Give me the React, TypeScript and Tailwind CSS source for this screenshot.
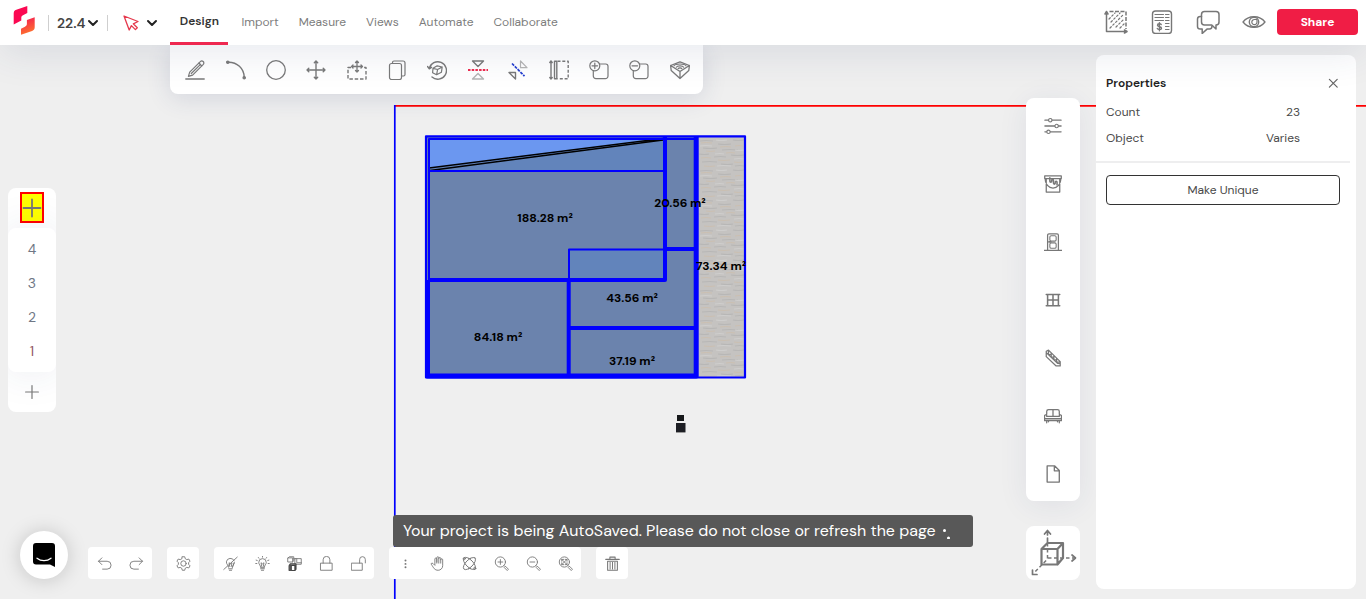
import type { ReactNode } from "react";

type IconProps = { children: ReactNode; box?: number; className?: string };

function Icon({ children, box = 20, className = "size-5" }: IconProps) {
  return (
    <svg
      viewBox={`0 0 ${box} ${box}`}
      className={`shrink-0 ${className}`}
      fill="none"
      stroke="currentColor"
      strokeWidth={1.2}
      strokeLinecap="round"
      strokeLinejoin="round"
      aria-hidden="true"
    >
      {children}
    </svg>
  );
}

type Tool = { label: string; icon: ReactNode };

const drawTools: Tool[] = [
  {
    label: "Draw line",
    icon: (
      <>
        <path d="M.8 19h18.400" strokeWidth="1.400" />
        <path d="M3.400 16.400l1.300-4.300L15.300 1.600a2 2 0 0 1 3 2.800L7.600 15.100zM13.800 3l3 3M6.300 13.500L15.500 4.400M3.400 16.400l1.500-.5" />
      </>
    ),
  },
  {
    label: "Draw arc",
    icon: (
      <>
        <path d="M2 2.300c9-.3 16 6 16.300 15.200" strokeWidth="1.400" />
        <circle cx="1.800" cy="2.200" r="1.200" fill="currentColor" />
        <circle cx="18.200" cy="17.800" r="1.200" fill="currentColor" />
      </>
    ),
  },
  { label: "Circle", icon: <circle cx="10" cy="10" r="9.300" strokeWidth="1.300" /> },
  {
    label: "Move",
    icon: <path d="M10 1v18M1 10h18M8.300 2.800L10 1l1.700 1.800M8.300 17.200L10 19l1.700-1.800M2.800 8.300L1 10l1.800 1.700M17.200 8.300L19 10l-1.800 1.700" strokeWidth="1.400" />,
  },
  {
    label: "Move copy",
    icon: (
      <>
        <path d="M4 7.500H1V19h18V7.500h-3" strokeDasharray="3.500 1.800" strokeLinecap="butt" strokeWidth="1.400" />
        <path d="M10 1v11M4.500 6.500h11M8.500 2.500L10 1l1.500 1.500M8.500 10.500L10 12l1.500-1.500M6 5L4.500 6.500 6 8M14 5l1.500 1.500L14 8" strokeWidth="1.300" />
      </>
    ),
  },
  {
    label: "Copy",
    icon: (
      <>
        <rect x="2.500" y="3.500" width="12" height="16" rx="2" />
        <path d="M5.500 3.500v-1a1.500 1.500 0 0 1 1.500-1.500h9a2 2 0 0 1 2 2v11.500a1.500 1.500 0 0 1-1.500 1.500h-2" />
      </>
    ),
  },
  {
    label: "Rotate",
    icon: (
      <>
        <path d="M2.300 8.500A8.700 8.700 0 1 1 5 17M.5 6.500l1.800 2.300 2.200-1.400" strokeWidth="1.400" />
        <path d="M6 8.300l4.200-2.500 5 1.200-.8 5.300-4.800 2.400-4-2zM6 8.300l4.600 1.200 4.600-2.500M10.600 9.500l-1 5.200" />
      </>
    ),
  },
  {
    label: "Mirror vertical",
    icon: (
      <>
        <path d="M4.500 1h11L10 6.500z" strokeWidth="1.400" />
        <path d="M4.500 19h11L10 13.500z" stroke="#b5b5b5" strokeWidth="1.400" />
        <path d="M0 10h20" stroke="#ef2b4f" strokeDasharray="2.500 1.200" strokeWidth="2" strokeLinecap="butt" />
      </>
    ),
  },
  {
    label: "Mirror diagonal",
    icon: (
      <>
        <path d="M1 12.500h6.500V19z" strokeWidth="1.400" />
        <path d="M12.500 1v6.700h6.500z" stroke="#b5b5b5" />
        <path d="M4 3.500l12.500 12.700" stroke="#243fd0" strokeDasharray="3 1" strokeWidth="1.700" strokeLinecap="butt" />
      </>
    ),
  },
  {
    label: "Offset",
    icon: (
      <>
        <path d="M8.500 1.300h10.700v17.500H8.500" strokeDasharray="3 1.800" strokeLinecap="butt" strokeWidth="1.400" />
        <path d="M5.500 1.200h2.300v17.600H5.500zM2 1v18M.8 2.500L2 1l1.200 1.500M.8 17.500L2 19l1.200-1.500" strokeWidth="1.400" />
      </>
    ),
  },
  {
    label: "Add shape",
    icon: (
      <>
        <path d="M10.500 4h6.200a2.300 2.300 0 0 1 2.300 2.300V16a2.600 2.600 0 0 1-2.600 2.600H6.900A2.600 2.600 0 0 1 4.300 16v-5.500" />
        <circle cx="5.800" cy="5.800" r="5" />
        <path d="M5.800 3v5.600M3 5.800h5.600" />
      </>
    ),
  },
  {
    label: "Subtract shape",
    icon: (
      <>
        <path d="M10.500 4h6.200a2.300 2.300 0 0 1 2.300 2.300V16a2.600 2.600 0 0 1-2.600 2.600H6.900A2.600 2.600 0 0 1 4.300 16v-5.500" />
        <circle cx="5.800" cy="5.800" r="5" />
        <path d="M3 5.800h5.600" />
      </>
    ),
  },
  {
    label: "Terrain",
    icon: (
      <>
        <path d="M10 1.800L.6 5.500l.6 5L10 18.500l8.800-8 .6-5zM.6 5.500L10 11.500l9.400-6M10 11.500v7" strokeWidth="1.300" />
        <path d="M4 5.800c1.500-2.400 10.500-2.400 12 0M6.300 7.200c1-1.700 6.400-1.700 7.400 0M8.200 8.600c.6-1 3-1 3.600 0" />
      </>
    ),
  },
];

const sideTools: Tool[] = [
  {
    label: "Settings",
    icon: (
      <>
        <path d="M1 3.500h4M9 3.500h10M1 10h11M16 10h3M1 16.500h2M7 16.500h12" strokeWidth="1.400" />
        <circle cx="7" cy="3.500" r="1.900" />
        <circle cx="14" cy="10" r="1.900" />
        <circle cx="5" cy="16.500" r="1.900" />
      </>
    ),
  },
  {
    label: "Materials",
    icon: (
      <>
        <path d="M.8 1h18.400v3H.8zM2.500 4v15h15V4M1.200 4c0 6 4 10.500 8.800 10.500S18.800 10 18.800 4" strokeWidth="1.400" />
        <path d="M6.500 3v4c0 1.500 2 1.500 2 0V6c0-1.500 2-1.500 2 0v3c0 1.500 2 1.500 2 0M12.500 8c0-1.500 2-1.500 2 0v3" strokeWidth="1.700" />
      </>
    ),
  },
  {
    label: "Doors",
    icon: (
      <>
        <path d="M0 19.200h20M4 19V2.500A1.500 1.500 0 0 1 5.500 1h9A1.500 1.500 0 0 1 16 2.500V19" strokeWidth="1.400" />
        <rect x="6.500" y="3" width="7" height="6" rx="1.500" />
        <rect x="6.500" y="11" width="7" height="6" rx="1.500" />
        <path d="M5.500 9.800h2" strokeWidth="2" />
      </>
    ),
  },
  {
    label: "Windows",
    icon: <path d="M2.500 4h15M2.500 16.500h15M4 4v12.500M16 4v12.500M10 4v12.500M4 10h12" strokeWidth="1.700" />,
  },
  {
    label: "Stairs",
    icon: <path d="M2.500 8.500v-6L5 1.200 18 14v4.800h-4.500zM2.500 4L15 16l3 .2M5 1.500v4.800h3V9h3v3h3v2.500h3M8 6.500V4.500M11 9V7.500M14 12v-1.500" strokeWidth="1.400" />,
  },
  {
    label: "Furniture",
    icon: <path d="M3 8V5a2 2 0 0 1 2-2h10a2 2 0 0 1 2 2v3M10 3v7M3 10.500V9.300a1.300 1.300 0 0 0-2.400.5v5.200h18.800V9.800A1.300 1.300 0 0 0 17 9.300v1.200zM.6 12.800h18.800M3 15v2.500M17 15v2.500M5 15v1.500M15 15v1.500" strokeWidth="1.400" />,
  },
  {
    label: "Documents",
    icon: <path d="M3.500 1h8.500l5 5v13h-13.500zM11.500 1v5.500H17" strokeWidth="1.500" />,
  },
];

const bottomGroups: Tool[][] = [
  [
    { label: "Undo", icon: <path d="M6.500 2.500L2 7l4.500 4.500M2 7h11.500a5.200 5.200 0 0 1 0 10.500H7.500" /> },
    { label: "Redo", icon: <path d="M13.500 2.500L18 7l-4.500 4.500M18 7H6.500a5.200 5.200 0 0 0 0 10.500h6" /> },
  ],
  [
    {
      label: "Preferences",
      icon: (
        <>
          <path d="M8.400 1h3.200l.8 2.700 2 1.100 2.700-.7 1.600 2.800-1.900 2v2.200l1.900 2-1.600 2.800-2.700-.7-2 1.100-.8 2.700H8.400l-.8-2.700-2-1.100-2.700.7-1.600-2.800 1.900-2V8.900l-1.900-2 1.600-2.800 2.700.7 2-1.100z" />
          <circle cx="10" cy="10" r="3.600" />
        </>
      ),
    },
  ],
  [
    {
      label: "Hide",
      icon: <path d="M7.500 15c0-3-3-3.500-3-7.200A5.500 5.500 0 0 1 15 6.500M15 9c-.3 3-2.500 3.500-2.500 6zM7.500 17h5M8.500 19h3M9 14l-1-5 2 1.500L12 9l-1 5M1 18L19 1.500" />,
    },
    {
      label: "Show",
      icon: <path d="M7.500 15c0-3-2.500-3.500-2.500-6.500a5 5 0 0 1 10 0c0 3-2.500 3.500-2.500 6.500zM7.500 17h5M8.500 19h3M9 14l-1-5 2 1.500L12 9l-1 5M10 .5v1M4.500 2l.7 1M15.500 2l-.7 1M1.500 5.500l1.500.5M18.500 5.500L17 6M1 10h1.500M17.500 10H19" />,
    },
    {
      label: "Isolate",
      icon: (
        <>
          <path d="M1.500 2.500h6V8h-6zM1.500 2.500L3 1h6v5.500L7.500 8M11 3.500h8V11h-8zM13 3.500v5.500h6M9 3.500h2" />
          <path d="M3 12.500h7.500v7H3zM3 12.500L4.500 10.500H12v7l-1.500 2" stroke="#444" strokeWidth="1.500" />
          <path d="M3.500 13H6v6H3.500z" fill="#555" stroke="#555" />
        </>
      ),
    },
    {
      label: "Lock",
      icon: <path d="M2.500 9.500h15V19h-15zM5.500 9.500V5a4.500 4.500 0 0 1 9 0v4.500" />,
    },
    {
      label: "Unlock",
      icon: <path d="M1 9.500h14V19H1zM11.500 9.500V4.700a3.800 3.800 0 0 1 7.600 0v4.500" />,
    },
  ],
  [
    {
      label: "More",
      icon: (
        <g fill="currentColor" stroke="none">
          <circle cx="10" cy="6" r="1.300" />
          <circle cx="10" cy="10.500" r="1.300" />
          <circle cx="10" cy="15" r="1.300" />
        </g>
      ),
    },
    {
      label: "Pan",
      icon: <path d="M6.500 11.500V4a1.300 1.300 0 0 1 2.600 0v5.500M9.100 8V2.300a1.300 1.300 0 0 1 2.600 0v7.200M11.700 3.300a1.300 1.300 0 0 1 2.600 0v6.200M14.300 5a1.300 1.300 0 0 1 2.600 0v8a6 6 0 0 1-6 6C6 19 5 16 1.700 11c-.7-1.500 1.300-2 2.300-1l2.500 2.500" />,
    },
    {
      label: "Orbit",
      icon: (
        <>
          <ellipse cx="10" cy="10" rx="10.500" ry="4.800" transform="rotate(45 10 10)" />
          <ellipse cx="10" cy="10" rx="10.500" ry="4.800" transform="rotate(-45 10 10)" />
          <circle cx="3" cy="3.500" r="1.400" />
          <circle cx="17" cy="16.500" r="1.400" />
          <path d="M8.500 2.500L10 4l1.500-1.500M8.500 17.500L10 16l1.500 1.500" />
        </>
      ),
    },
    {
      label: "Zoom in",
      icon: (
        <>
          <circle cx="8.500" cy="8" r="6.800" />
          <path d="M8.500 4.800v6.400M5.300 8h6.400M13.500 12.800l1 1M14 15l1.300-1.300 4 4-1.300 1.300z" />
        </>
      ),
    },
    {
      label: "Zoom out",
      icon: (
        <>
          <circle cx="8.500" cy="8" r="6.800" />
          <path d="M5.300 8h6.400M13.500 12.800l1 1M14 15l1.300-1.300 4 4-1.300 1.300z" />
        </>
      ),
    },
    {
      label: "Zoom to fit",
      icon: (
        <>
          <circle cx="8.500" cy="8" r="6.800" />
          <path d="M5 4.500l7 7M12 4.500l-7 7M5 7V4.500h2.500M9.500 4.500H12V7M5 9v2.500h2.500M9.500 11.500H12V9M13.500 12.800l1 1M14 15l1.300-1.300 4 4-1.300 1.300z" />
        </>
      ),
    },
  ],
  [
    {
      label: "Delete",
      icon: (
        <>
          <path d="M1 4.500h18M6.500 4V1.500h7V4M3.500 7h13V19h-13z" strokeWidth="1.400" />
          <path d="M6.800 8.500v9M10 8.500v9M13.200 8.500v9" strokeWidth="1.300" />
        </>
      ),
    },
  ],
];

const tabs = ["Import", "Measure", "Views", "Automate", "Collaborate"];

const rooms = [
  { area: "188.28 m²", x: 545, y: 222 },
  { area: "20.56 m²", x: 680, y: 207 },
  { area: "73.34 m²", x: 721, y: 270 },
  { area: "43.56 m²", x: 632, y: 302 },
  { area: "84.18 m²", x: 498, y: 341 },
  { area: "37.19 m²", x: 632, y: 365 },
];

function Plan() {
  return (
    <svg className="absolute inset-0 h-full w-full" role="img" aria-label="Floor plan">
      <defs>
        <pattern id="stone" x="698" y="138" width="47" height="30" patternUnits="userSpaceOnUse">
          <rect width="47" height="30" fill="#c5c3c1" />
          <path d="M2 3q6-1 13 0M20 6q7 1 13 0M35 2q5 1 11 0M5 10q8 1 14 0M24 12q8-1 16 0M1 16q6 1 10 0M16 19q7-1 12 0M33 17q6 1 13 0M4 24q8-1 15 0M23 26q7 1 12 0M37 28q5-1 9 0" fill="none" stroke="#b8b7b6" strokeWidth="1.200" />
          <path d="M3 5q5-1 11 0M22 9q6-1 11 0M37 8q4-1 8 0M8 13q4 1 9 0M28 15q5-1 9 0M3 20q5-1 10 0M20 22q6 1 12 0M36 24q4 1 9 0M6 28q6 1 11 0" fill="none" stroke="#cbbfb1" strokeWidth="1" />
          <path d="M18 2q5 1 11 0M2 8q6-1 12 0M37 12q4 1 9 0M17 16q5-1 9 0M19 28q6-1 14 0M36 21q5-1 10 0" fill="none" stroke="#cfcecd" strokeWidth="1.200" />
        </pattern>
      </defs>
      <path d="M395 105.800H4000" stroke="#ff0000" strokeWidth="1.700" />
      <path d="M394.800 105V4000" stroke="#0000ff" strokeWidth="1.700" />

      <rect x="427" y="137" width="270" height="240" fill="#6b83ad" />
      <path d="M429 139H665L429 169z" fill="#6b97f0" />
      <path d="M665 139V171H429V169z" fill="#6284bb" />
      <rect x="570" y="250" width="95" height="29" fill="#6284bb" />
      <rect x="697" y="137" width="48" height="240" fill="url(#stone)" />

      <path d="M429 168L663 138.500M430 170.500L665 139.800" stroke="#000" strokeWidth="1.500" />

      <g fill="none" stroke="#0000ff" strokeLinejoin="round">
        <path d="M426 136.300H745V377.500H426z" strokeWidth="2.200" />
        <path d="M429 376V139H697" strokeWidth="2" />
        <path d="M429 171H665M569 281V249.500H665" strokeWidth="2" />
        <path d="M429 280H665V137" strokeWidth="4" />
        <path d="M665 249H697M568.700 280V376M569 328H697" strokeWidth="4" />
        <path d="M427.500 280V376H696.200V137" strokeWidth="5" />
      </g>

      <g className="text-xs font-bold" fill="#000" textAnchor="middle">
        {rooms.map((room) => (
          <text key={room.area} x={room.x} y={room.y}>
            {room.area}
          </text>
        ))}
      </g>

      <rect x="677" y="415" width="7" height="6" fill="#16181a" />
      <rect x="676" y="423" width="9.500" height="9" fill="#1d1e24" />
      <path d="M676 432.500h9.500" stroke="#999" />
    </svg>
  );
}

function Chevron() {
  return (
    <svg viewBox="0 0 12 8" className="h-2 w-3 shrink-0" fill="none" stroke="#222" strokeWidth="2" strokeLinecap="round" strokeLinejoin="round" aria-hidden="true">
      <path d="M2 2l4 4 4-4" />
    </svg>
  );
}

function Header() {
  return (
    <header className="relative z-10 flex h-[45px] shrink-0 items-center bg-white pr-2 pl-[13px] shadow-[0_6px_40px_rgba(40,55,110,0.12)]">
      <a href="#home" aria-label="Home" className="mb-1 shrink-0">
        <svg viewBox="0 0 22 30" className="h-[30px] w-[22px]" aria-hidden="true">
          <defs>
            <linearGradient id="flame" x1="0.500" y1="0" x2="0.800" y2="1">
              <stop offset="0" stopColor="#f5204f" />
              <stop offset="1" stopColor="#ff7d2a" />
            </linearGradient>
          </defs>
          <path d="M14.300 0v7L10 9.200c-1.200.6-1.700 1.400-1.700 2.600v2.700L.7 18.500V7.500C.7 5.500 1.500 4.500 3.300 3.800z" fill="#fb0852" />
          <path d="M21.700 11.200v10c0 2-.8 3-2.600 3.700L8 28.700v-6l4-2c1.300-.7 1.900-1.500 1.900-2.900V14z" fill="url(#flame)" />
        </svg>
      </a>
      <button className="ml-[13px] flex h-4 shrink-0 items-center gap-[2px] border-x border-[#cfcfcf] px-2 text-sm font-semibold text-[#444]">
        22.4
        <Chevron />
      </button>
      <button className="ml-[15px] flex items-center gap-[7px]" aria-label="Select tool">
        <svg viewBox="0 0 16 16" className="size-4" fill="none" stroke="#e5384c" strokeWidth="1.300" strokeLinejoin="round" aria-hidden="true">
          <path d="M1 1l14 5.500-4.700 2.300 4 3.900-1.900 1.900-4-4L6.200 15z" />
        </svg>
        <Chevron />
      </button>
      <nav className="ml-3 flex h-full shrink-0 text-xs text-[#7d7d7d]">
        <a href="#design" aria-current="page" className="flex w-[58px] items-center justify-center border-b-3 border-[#ee2850] font-semibold text-[#333]">
          Design
        </a>
        <div className="ml-[13px] flex items-center gap-5 pb-[2px]">
          {tabs.map((tab) => (
            <a key={tab} href={`#${tab.toLowerCase()}`}>
              {tab}
            </a>
          ))}
        </div>
      </nav>
      <div className="mb-[2px] ml-auto flex shrink-0 items-center gap-[22px] text-[#777]">
        <button aria-label="Area">
          <Icon box={24} className="size-6">
            <path d="M2.500 2v19.500H23M1 4l1.500-2.500L4 4M20.500 20l2.500 1.500L20.500 23" strokeWidth="1.500" />
            <path d="M5.500 1.500H22V19" strokeWidth="1.500" strokeDasharray="4 1.500" strokeLinecap="butt" />
            <path d="M5 9l6-6M7 12l9-9M6 18L19 5M12 17l8-8M16 18l4-4" strokeDasharray="1.800 2.200" />
          </Icon>
        </button>
        <button aria-label="Estimate">
          <Icon box={24} className="size-6">
            <rect x="2.500" y="1" width="19" height="22.500" rx="3" strokeWidth="1.400" />
            <path d="M5 4.500h8.500M5 7.500h8.500M5 10.500h8.500M15.500 4.500H19M15.500 7.500H19M15.500 10.500H19M15.500 13.500H19M15.500 16.500H19M15.500 19.500H19" />
            <path d="M11.200 14.500c-.5-1-3.700-1.200-3.700.7 0 2 4 1 4 3 0 1.900-3.600 1.600-4.200.3M9.400 12.800v8" strokeWidth="1.400" />
          </Icon>
        </button>
        <button aria-label="Comments">
          <Icon box={24} className="size-6">
            <path d="M8.500 1.500h11.500a3 3 0 0 1 3 3v7.500a3 3 0 0 1-3 3v4l-4.200-4H8.500a3 3 0 0 1-3-3V4.500a3 3 0 0 1 3-3z" strokeWidth="1.500" />
            <path d="M5.500 6.500H4.200A2.700 2.700 0 0 0 1.500 9v7.500a2.700 2.700 0 0 0 2.700 2.600h2V23.500l4.800-4.400h2.500c1.500 0 2.500-1 2.500-3" strokeWidth="1.500" />
          </Icon>
        </button>
        <button aria-label="Preview">
          <Icon box={24} className="size-6">
            <path d="M1 12C6.500 5 17.500 5 23 12c-5.500 7-16.500 7-22 0z" strokeWidth="1.300" />
            <circle cx="12" cy="12" r="4.700" strokeWidth="1.400" />
            <path d="M12.500 9.500h2.500v2.500a2.600 2.600 0 1 1-2.500-2.500z" />
          </Icon>
        </button>
      </div>
      <button className="mb-[2px] ml-[11px] h-[26px] w-[81px] shrink-0 rounded bg-[#f01d45] text-xs font-bold text-white">Share</button>
    </header>
  );
}

function Ribbon() {
  return (
    <div role="toolbar" aria-label="Drawing tools" className="ml-[170px] grid h-[49px] w-[533px] shrink-0 grid-cols-13 rounded-b-lg bg-white pr-[3px] pl-[5px] text-[#7a7a7a] shadow-[0_4px_24px_rgba(40,55,110,0.14)]">
      {drawTools.map((tool) => (
        <button key={tool.label} aria-label={tool.label} className="flex items-center justify-center">
          <Icon>{tool.icon}</Icon>
        </button>
      ))}
    </div>
  );
}

function Levels() {
  return (
    <div className="mt-[94px] ml-2 flex w-12 shrink-0 flex-col overflow-hidden rounded-lg bg-white">
      <div className="flex h-10 items-start justify-center pt-1">
        <button aria-label="Add level above" className="flex h-[31px] w-6 items-center justify-center border-2 border-[#ff0000] bg-[#ffff00] text-[#777]">
          <Icon>
            <path d="M10 1.500v17M1.500 10h17" strokeWidth="1.800" />
          </Icon>
        </button>
      </div>
      <ul className="rounded-lg bg-white py-1 text-center text-sm text-[#6f7785] shadow-[0_0_40px_rgba(40,55,110,0.10)]">
        {[4, 3, 2, 1].map((level) => (
          <li key={level}>
            <button className={level === 1 ? "h-[34px] w-full text-[#8f5563]" : "h-[34px] w-full"}>{level}</button>
          </li>
        ))}
      </ul>
      <button aria-label="Add level below" className="flex h-10 items-center justify-center text-[#777]">
        <Icon className="size-4">
          <path d="M10 2v16M2 10h16" strokeWidth="1.500" />
        </Icon>
      </button>
    </div>
  );
}

function BottomBar() {
  return (
    <div className="mt-auto mb-5 ml-5 flex items-end">
      <button aria-label="Open chat" className="mr-5 flex size-12 shrink-0 items-center justify-center rounded-full bg-white shadow-[0_1px_20px_rgba(0,0,0,0.18)]">
        <svg viewBox="0 0 22 24" className="h-6 w-[22px]" aria-hidden="true">
          <path d="M3 0h16a3 3 0 0 1 3 3v21l-5-2.500H3a3 3 0 0 1-3-3V3a3 3 0 0 1 3-3z" fill="#000" />
          <path d="M4 15.200c4 3.200 10 3.200 14 0" fill="none" stroke="#fff" strokeWidth="1.300" strokeLinecap="round" />
        </svg>
      </button>
      <div className="flex gap-[15px]">
        {bottomGroups.map((group) => (
          <div key={group[0].label} className="flex rounded bg-white text-[#777]">
            {group.map((tool) => (
              <button key={tool.label} aria-label={tool.label} className="flex size-8 items-center justify-center pt-px pl-px">
                <Icon className="size-[15px]">{tool.icon}</Icon>
              </button>
            ))}
          </div>
        ))}
      </div>
    </div>
  );
}

function SideTools() {
  return (
    <div className="flex w-[54px] shrink-0 flex-col pt-[43px]">
      <div role="toolbar" aria-label="Library" className="flex flex-col items-center gap-10 rounded-lg bg-white pt-[19px] pb-[18px] text-[#777] shadow-[0_4px_30px_rgba(40,55,110,0.08)]">
        {sideTools.map((tool) => (
          <button key={tool.label} aria-label={tool.label}>
            <Icon className="size-[18px]">{tool.icon}</Icon>
          </button>
        ))}
      </div>
      <button aria-label="3D view" className="mt-[25px] flex h-[54px] items-center justify-center rounded-lg bg-white text-[#777]">
        <Icon box={54} className="size-[54px]">
          <path d="M15.500 23h16v15.500h-16zM15.500 23l6-6h15.500l-5.500 6M37 17v15l-5.500 6.500" strokeWidth="2.200" />
          <path d="M21.500 17V33L8 47M22 32h26" strokeDasharray="3.500 2.500" strokeLinecap="butt" strokeWidth="1.500" />
          <path d="M21.500 16V12M21.500 9V5M18.500 8l3-3.500 3 3.500M46 29l3.500 3-3.500 3M6.500 44v4.500H11" strokeWidth="1.700" />
        </Icon>
      </button>
    </div>
  );
}

function Properties() {
  return (
    <section aria-labelledby="properties-title" className="w-[260px] shrink-0 rounded-lg bg-white text-xs text-[#4a4a4a]">
      <div className="flex items-center justify-between px-[10px] pt-[18px]">
        <h2 id="properties-title" className="h-5 leading-5 font-semibold text-[#222]">
          Properties
        </h2>
        <button aria-label="Close" className="mr-[7px] text-[#666]">
          <Icon className="size-3">
            <path d="M4 4l13 13M17 4L4 17" strokeWidth="2" />
          </Icon>
        </button>
      </div>
      <dl className="mr-[6px] border-b-2 border-[#eeeeef] pt-[6px] pr-[50px] pb-[10px] pl-[10px] leading-[26px]">
        <div className="flex justify-between">
          <dt>Count</dt>
          <dd>23</dd>
        </div>
        <div className="flex justify-between">
          <dt>Object</dt>
          <dd>Varies</dd>
        </div>
      </dl>
      <div className="pt-3 pr-4 pl-[10px]">
        <button className="h-[30px] w-full rounded border border-[#333] bg-white">Make Unique</button>
      </div>
    </section>
  );
}

function Toast() {
  return (
    <div role="status" className="absolute bottom-[52px] left-1/2 flex h-8 w-[580px] -translate-x-1/2 items-center rounded-[3px] bg-[#585858] pl-[10px] text-base whitespace-nowrap text-white">
      Your project is being AutoSaved. Please do not close or refresh the page
      <svg viewBox="0 0 16 16" className="ml-1 size-4 shrink-0" fill="#fff" aria-hidden="true">
        <circle cx="4.500" cy="7.500" r="1.500" />
        <circle cx="8.500" cy="15" r="1.500" />
      </svg>
    </div>
  );
}

export default function App() {
  return (
    <div className="relative flex min-h-screen flex-col overflow-hidden bg-[#efefef] font-['DM_Sans','Inter',sans-serif]">
      <Plan />
      <Header />
      <main className="relative flex flex-1 justify-between">
        <div className="flex flex-col">
          <Ribbon />
          <Levels />
          <BottomBar />
        </div>
        <aside className="flex gap-4 py-[10px] pr-[10px]">
          <SideTools />
          <Properties />
        </aside>
      </main>
      <Toast />
    </div>
  );
}
